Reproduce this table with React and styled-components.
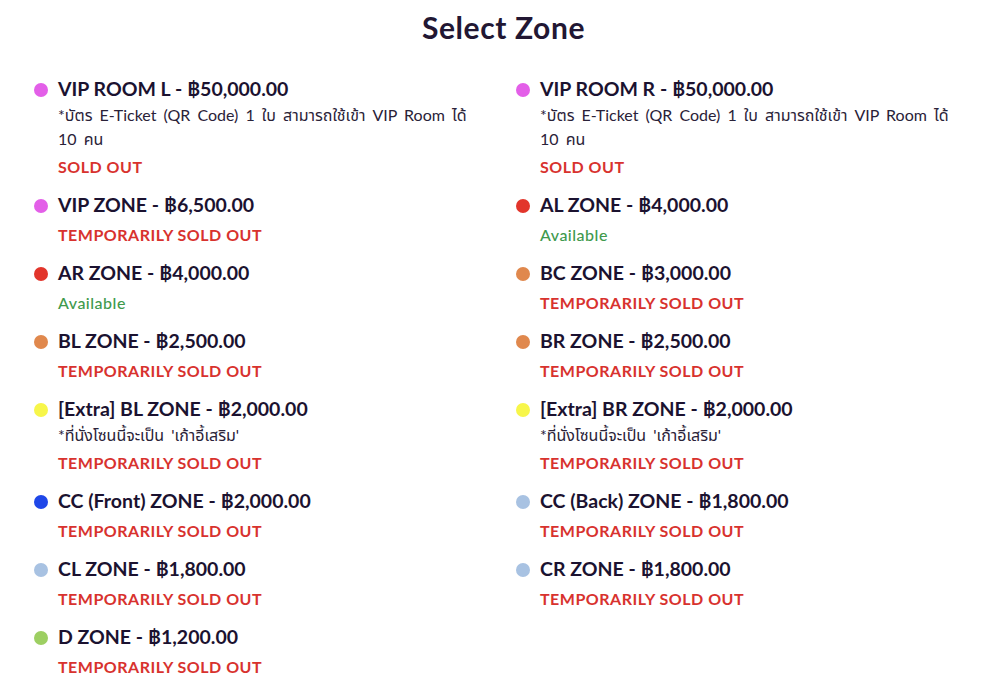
import React from 'react'
import styled, { createGlobalStyle } from 'styled-components'

const GlobalStyle = createGlobalStyle`
  body {
    margin: 0;
    background: #ffffff;
    font-family: Lato, "Noto Sans Thai", "Noto Sans", sans-serif;
    color: #1b1230;
  }
`

const zones = [
  { name: 'VIP ROOM L - ฿50,000.00', color: '#e35fe8', note: '*บัตร E-Ticket (QR Code) 1 ใบ สามารถใช้เข้า VIP Room ได้ 10 คน', status: 'SOLD OUT' },
  { name: 'VIP ROOM R - ฿50,000.00', color: '#e35fe8', note: '*บัตร E-Ticket (QR Code) 1 ใบ สามารถใช้เข้า VIP Room ได้ 10 คน', status: 'SOLD OUT' },
  { name: 'VIP ZONE - ฿6,500.00', color: '#e35fe8', status: 'TEMPORARILY SOLD OUT' },
  { name: 'AL ZONE - ฿4,000.00', color: '#e2352b', status: 'Available', ok: true },
  { name: 'AR ZONE - ฿4,000.00', color: '#e2352b', status: 'Available', ok: true },
  { name: 'BC ZONE - ฿3,000.00', color: '#e0884d', status: 'TEMPORARILY SOLD OUT' },
  { name: 'BL ZONE - ฿2,500.00', color: '#e0884d', status: 'TEMPORARILY SOLD OUT' },
  { name: 'BR ZONE - ฿2,500.00', color: '#e0884d', status: 'TEMPORARILY SOLD OUT' },
  { name: '[Extra] BL ZONE - ฿2,000.00', color: '#f7f64a', note: "*ที่นั่งโซนนี้จะเป็น 'เก้าอี้เสริม'", status: 'TEMPORARILY SOLD OUT' },
  { name: '[Extra] BR ZONE - ฿2,000.00', color: '#f7f64a', note: "*ที่นั่งโซนนี้จะเป็น 'เก้าอี้เสริม'", status: 'TEMPORARILY SOLD OUT' },
  { name: 'CC (Front) ZONE - ฿2,000.00', color: '#1f47e8', status: 'TEMPORARILY SOLD OUT' },
  { name: 'CC (Back) ZONE - ฿1,800.00', color: '#a8c2e2', status: 'TEMPORARILY SOLD OUT' },
  { name: 'CL ZONE - ฿1,800.00', color: '#a8c2e2', status: 'TEMPORARILY SOLD OUT' },
  { name: 'CR ZONE - ฿1,800.00', color: '#a8c2e2', status: 'TEMPORARILY SOLD OUT' },
  { name: 'D ZONE - ฿1,200.00', color: '#9dcf62', status: 'TEMPORARILY SOLD OUT' },
]

export default function App() {
  return (
    <Page>
      <GlobalStyle />
      <Title>Select Zone</Title>
      <ZoneGrid>
        {zones.map(z => (
          <Zone key={z.name}>
            <Dot color={z.color} />
            <div>
              <ZoneName>{z.name}</ZoneName>
              {z.note && <Note>{z.note}</Note>}
              <Status ok={z.ok}>{z.status}</Status>
            </div>
          </Zone>
        ))}
      </ZoneGrid>
    </Page>
  )
}

const Page = styled.div`
  width: 987px;
  padding: 10px 0 0 34px;
  box-sizing: border-box;
`

const Title = styled.h2`
  margin: 0 0 0 -34px;
  padding-left: 20px;
  text-align: center;
  font-size: 30px;
  line-height: 34px;
  font-weight: 700;
  letter-spacing: 0.6px;
  color: #221733;
`

const ZoneGrid = styled.div`
  display: grid;
  grid-template-columns: 482px 482px;
  row-gap: 12px;
  margin-top: 31px;
`

const Zone = styled.div`
  display: grid;
  grid-template-columns: 14px 1fr;
  column-gap: 10px;
  align-items: start;
`

const Dot = styled.span`
  width: 14px;
  height: 14px;
  border-radius: 50%;
  background: ${props => props.color};
  margin-top: 8px;
`

const ZoneName = styled.div`
  font-size: 19.5px;
  line-height: 28px;
  font-weight: 700;
  color: #1b1230;
`

const Note = styled.div`
  font-size: 16px;
  line-height: 24px;
  max-width: 428px;
  word-spacing: 3px;
  color: #2a2238;
`

const Status = styled.div`
  margin-top: 4px;
  font-size: 16px;
  line-height: 24px;
  letter-spacing: 0.5px;
  color: ${props => props.ok ? '#3f9a4d' : '#d8322e'};
  font-weight: ${props => props.ok ? 500 : 700};
`
